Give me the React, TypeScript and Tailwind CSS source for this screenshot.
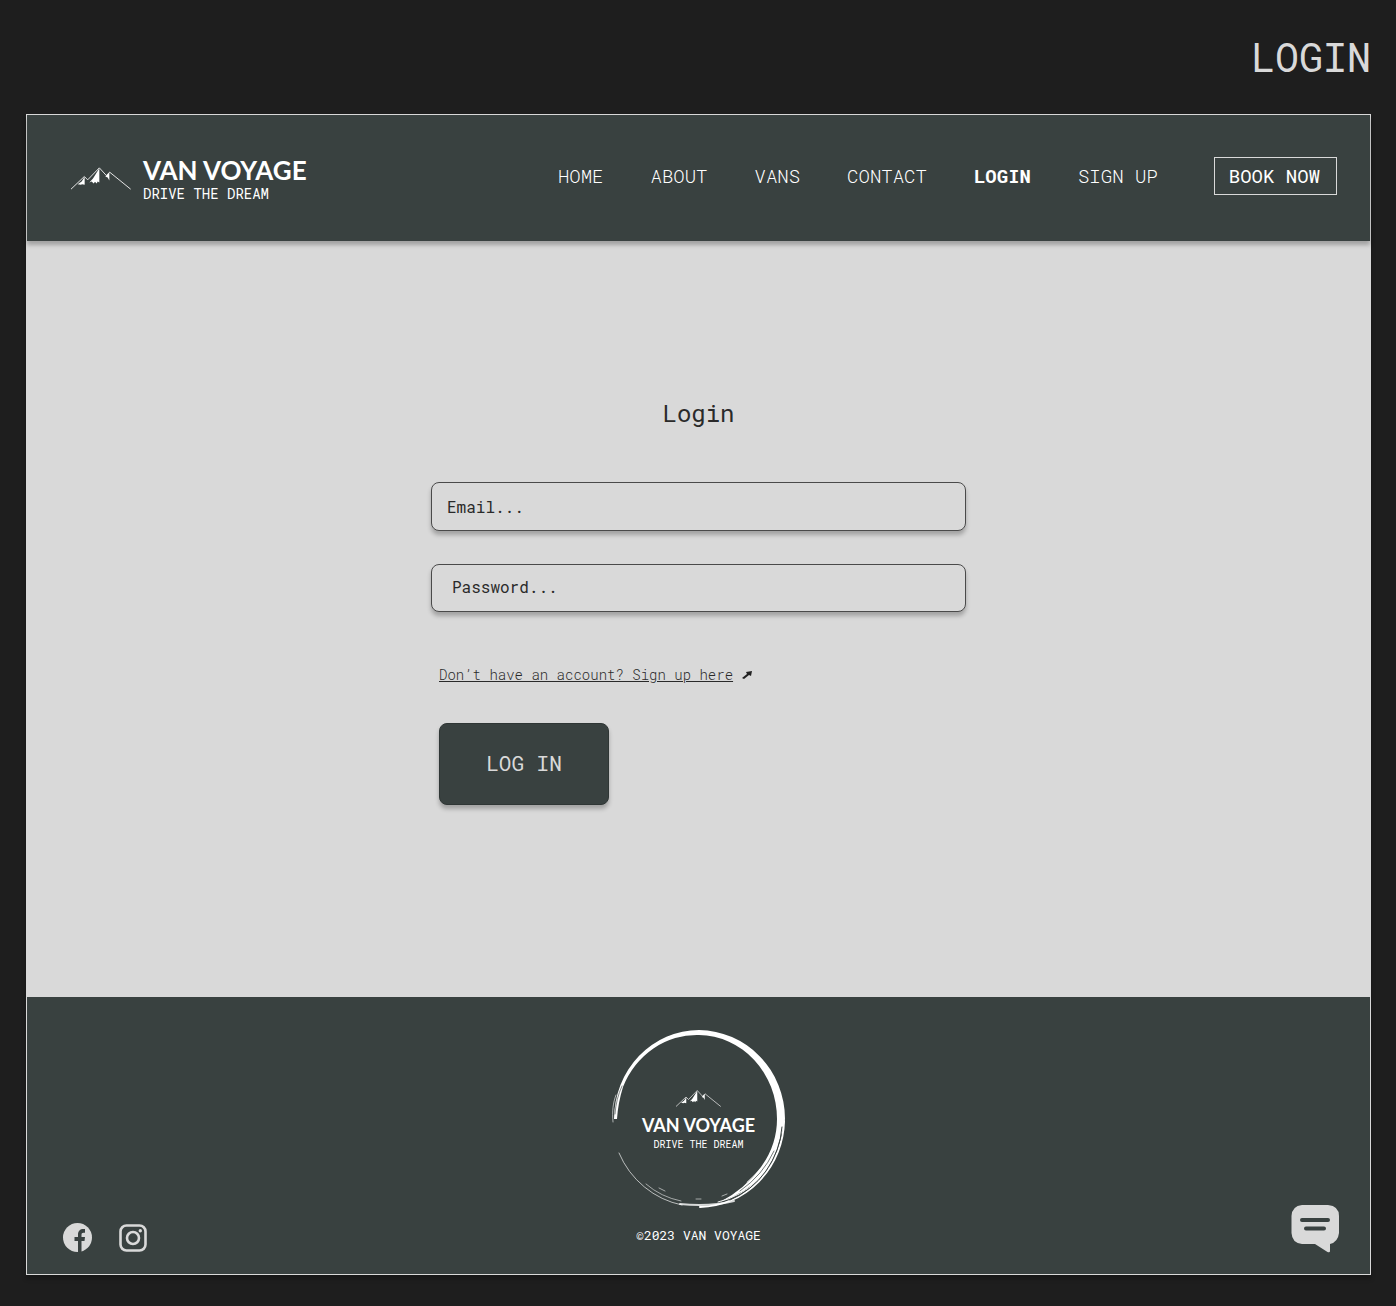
import React from "react";

const navItems = [
  { label: "HOME", href: "#home" },
  { label: "ABOUT", href: "#about" },
  { label: "VANS", href: "#vans" },
  { label: "CONTACT", href: "#contact" },
  { label: "LOGIN", href: "#login", active: true },
  { label: "SIGN UP", href: "#signup" },
];

function Mountains({ className }: { className: string }) {
  return (
    <svg viewBox="0 0 180 68" className={className} aria-hidden="true">
      <path
        d="M0 66 40 28 50 38 85 2 106 25 116 15 179 66"
        fill="none"
        stroke="#e4e4e4"
        strokeWidth="3"
      />
      <path
        d="M41 29V53L33 51 30 53 20 51 32 43ZM85 3V46L80 43 77 49 72 44 68 49 62 43 55 46 66 34ZM103 28 115 16V40L110 31Z"
        fill="#fff"
      />
    </svg>
  );
}

function BrushRing({ className }: { className: string }) {
  return (
    <svg viewBox="0 0 174 180" className={className} aria-hidden="true">
      <g fill="none" stroke="#fff" strokeLinecap="round">
        <path
          fill="#fff"
          stroke="none"
          d="M2 90A85 89 0 0 1 87 1A87 89 0 0 1 173 90Q172 99 169 106Q164 130 150 147Q134 164 108 173Q133 160 149 138Q165 116 165 90A79 84 0 0 0 87 6A80 85 0 0 0 11 58Q6 74 5 90Z"
        />
        <path d="M1 93C0 82 1 74 4 66" strokeWidth="1" opacity=".6" />
        <path d="M172 92A86 88 0 0 1 88 178" strokeWidth="2" />
        <path d="M169 112A84 86 0 0 1 106 173" strokeWidth="1" opacity=".9" />
        <path d="M122 172Q98 178 68 175" strokeWidth="2" opacity=".8" />
        <path d="M7 124A87 89 0 0 0 70 176" strokeWidth="1" opacity=".65" />
        <path d="M34 155Q49 168 69 172" strokeWidth="1" opacity=".55" />
        <path d="M47 159 53 162M84 170H89M110 167 115 165" strokeWidth="1" opacity=".55" />
        <path d="M135 153 150 139" strokeWidth="1" opacity=".6" />
      </g>
      <g fill="none" stroke="#394140" strokeLinecap="round">
        <path d="M170 98A84 86 0 0 1 118 171" strokeWidth="1" />
        <path d="M162 122Q151 146 128 162" strokeWidth="1" opacity=".7" />
        <path d="M125 9Q139 16 150 29" strokeWidth="1" opacity=".5" />
        <path d="M3 85Q4 70 10 57" strokeWidth="1" opacity=".6" />
      </g>
    </svg>
  );
}

function FacebookIcon() {
  return (
    <svg viewBox="0 0 29 29" className="size-[29px]" aria-hidden="true">
      <circle cx="14.500" cy="14.500" r="14.500" fill="#d9d9d9" />
      <path
        d="M15 29V18H11.500V14H15V11.500C15 8 17.200 6 20.300 6H22V9.800H20.500C19 9.800 18.500 10.600 18.500 12V14H22L21.500 18H18.500V29Z"
        fill="#394140"
      />
    </svg>
  );
}

function InstagramIcon() {
  return (
    <svg viewBox="0 0 28 28" className="size-7" fill="none" aria-hidden="true">
      <rect x="1.500" y="1.500" width="25" height="25" rx="6" stroke="#d9d9d9" strokeWidth="2.600" />
      <circle cx="14" cy="14" r="6" stroke="#d9d9d9" strokeWidth="2.600" />
      <circle cx="21.300" cy="6.800" r="1.700" fill="#d9d9d9" />
    </svg>
  );
}

function ChatIcon() {
  return (
    <svg viewBox="0 0 48 48" className="size-12" aria-hidden="true">
      <path
        d="M11 0H37Q48 1 48 11V28Q47 37 39 39V46Q39 48 36.500 47L24 39H11Q1 38 .500 28V11Q1 1 11 0Z"
        fill="#d9d9d9"
      />
      <path d="M11 15H37M15 23.500H33" stroke="#394140" strokeWidth="4" strokeLinecap="round" />
    </svg>
  );
}

export default function App() {
  return (
    <div className="min-h-screen bg-[#1e1e1e] pt-8 pr-[25px] pb-[31px] pl-[26px] font-['Roboto_Mono','Noto_Sans_Mono',monospace]">
      <h1 className="mb-8 text-right text-[40px] leading-[50px] text-[#d9d9d9]">LOGIN</h1>

      <div className="border border-[#d9d9d9] bg-[#d9d9d9] shadow-[0_4px_4px_rgba(0,0,0,0.25)]">
        <header className="flex items-start justify-between bg-[#394140] pr-[33px] pb-9 pl-11 pt-[42px] shadow-[0_4px_4px_rgba(0,0,0,0.25)]">
          <a href="#home" className="flex items-start gap-3 text-white">
            <Mountains className="mt-[10px] h-[23px] w-[60px]" />
            <span className="flex flex-col">
              <span className="font-[Lato,sans-serif] text-[26px] leading-[26px] font-bold">VAN VOYAGE</span>
              <span className="text-[14px] leading-[22px]">DRIVE THE DREAM</span>
            </span>
          </a>

          <div className="flex items-center gap-14">
            <nav className="flex items-center gap-[47px] text-[19px] leading-[38px]">
              {navItems.map((item) => (
                <a
                  key={item.label}
                  href={item.href}
                  className={item.active ? "font-bold text-white" : "font-light text-white"}
                >
                  {item.label}
                </a>
              ))}
            </nav>
            <button type="button" className="h-[38px] border border-[#d9d9d9] pr-4 pl-[14px] text-[19px] text-white">
              BOOK NOW
            </button>
          </div>
        </header>

        <main className="px-6 pt-[156px] pb-48 text-[#2a2a2a]">
          <form className="mx-auto flex w-full max-w-[535px] flex-col" onSubmit={(e) => e.preventDefault()}>
            <h2 className="text-center text-[24px] leading-8">Login</h2>
            <input
              type="email"
              aria-label="Email"
              placeholder="Email..."
              className="mt-[53px] h-[49px] rounded-lg border border-[#4a4a4a] bg-[#d9d9d9] px-[15px] text-[16px] shadow-[0_4px_4px_rgba(0,0,0,0.25)] placeholder:text-[#2a2a2a]"
            />
            <input
              type="password"
              aria-label="Password"
              placeholder="Password..."
              className="mt-[33px] h-12 rounded-lg border border-[#4a4a4a] bg-[#d9d9d9] px-5 pb-[3px] text-[16px] shadow-[0_4px_4px_rgba(0,0,0,0.25)] placeholder:text-[#2a2a2a]"
            />
            <div className="mt-[51px] flex items-center gap-2 pl-2 text-[14px] leading-6">
              <a href="#signup" className="font-light underline">
                Don’t have an account? Sign up here
              </a>
              <svg viewBox="0 0 12 10" className="h-[10px] w-3" aria-hidden="true">
                <path d="M1 8 6 4 5 2 11 1 10 6 8 5 3 9Z" fill="#222" />
              </svg>
            </div>
            <button
              type="submit"
              className="mt-9 ml-2 h-[82px] w-[170px] rounded-lg border border-[#2f3635] bg-[#394140] text-[21px] text-[#d9d9d9] shadow-[0_4px_4px_rgba(0,0,0,0.25)]"
            >
              LOG IN
            </button>
          </form>
        </main>

        <footer className="grid grid-cols-[1fr_auto_1fr] items-end bg-[#394140] px-[31px] pt-8 pb-[21px]">
          <div className="flex items-center gap-[27px] pb-[1px] pl-[5px]">
            <a href="#facebook" aria-label="Facebook">
              <FacebookIcon />
            </a>
            <a href="#instagram" aria-label="Instagram">
              <InstagramIcon />
            </a>
          </div>

          <div className="flex flex-col items-center pb-2 text-white">
            <div className="grid place-items-center">
              <BrushRing className="col-start-1 row-start-1 h-[180px] w-[174px]" />
              <div className="col-start-1 row-start-1 flex flex-col items-center pt-[2px]">
                <Mountains className="h-[17px] w-[45px]" />
                <span className="mt-2 font-[Lato,sans-serif] text-[18px] leading-[20px] font-bold">VAN VOYAGE</span>
                <span className="mt-1 text-[10px] leading-3">DRIVE THE DREAM</span>
              </div>
            </div>
            <p className="mt-4 text-[13px] leading-5">©2023 VAN VOYAGE</p>
          </div>

          <button type="button" aria-label="Chat" className="justify-self-end">
            <ChatIcon />
          </button>
        </footer>
      </div>
    </div>
  );
}
